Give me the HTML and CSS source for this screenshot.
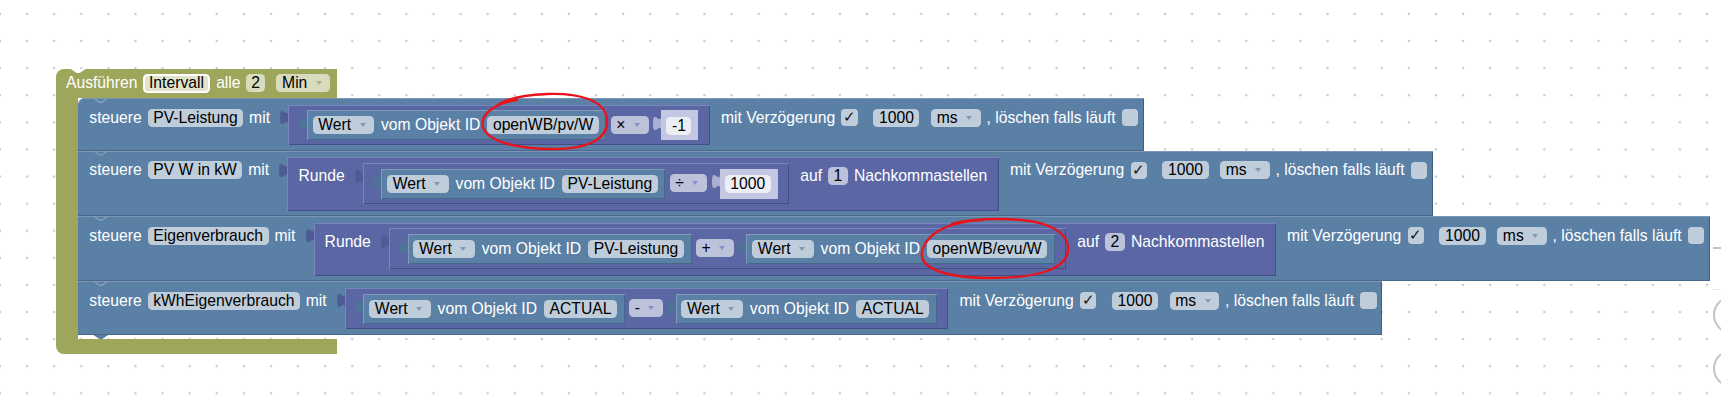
FILE: index.html
```html
<!DOCTYPE html>
<html lang="de">
<head>
<meta charset="utf-8">
<title>Blockly Workspace</title>
<link rel="stylesheet" href="styles.css">
</head>
<body>
<div class="canvas">
  <div class="event">
    <div class="event-head">
      <span class="lbl">Ausführen</span>
      <span class="fld olive sel">Intervall</span>
      <span class="lbl">alle</span>
      <span class="fld olive num">2</span>
      <span class="fld olive dd">Min<i class="arr"></i></span>
    </div>
    <div class="event-body">
      <div class="event-arm"></div>
      <div class="stack">

        <!-- Row 1 -->
        <div class="stmt first">
          <span class="lbl">steuere</span>
          <span class="fld">PV-Leistung</span>
          <span class="lbl">mit</span>
          <span class="slot">
            <svg class="tab tab-purple" viewBox="0 0 8 15"><path d="M8,0 c0,10 -8,-8 -8,7.5 s8,-2.5 8,7.5 z"/></svg>
            <div class="arith">
              <span class="slot">
                <svg class="tab tab-blue" viewBox="0 0 8 15"><path d="M8,0 c0,10 -8,-8 -8,7.5 s8,-2.5 8,7.5 z"/></svg>
                <div class="get">
                  <span class="fld dd">Wert<i class="arr"></i></span>
                  <span class="lbl">vom Objekt ID</span>
                  <span class="fld">openWB/pv/W</span>
                </div>
              </span>
              <span class="fld op dd">×<i class="arr"></i></span>
              <span class="slot">
                <svg class="tab tab-shadow" viewBox="0 0 8 15"><path d="M8,0 c0,10 -8,-8 -8,7.5 s8,-2.5 8,7.5 z"/></svg>
                <div class="shadow"><span class="fld light">-1</span></div>
              </span>
            </div>
          </span>
          <span class="lbl">mit Verzögerung</span>
          <span class="chk">✓</span>
          <span class="fld num">1000</span>
          <span class="fld dd">ms<i class="arr"></i></span>
          <span class="lbl">, löschen falls läuft</span>
          <span class="chk"></span>
        </div>

        <!-- Row 2 -->
        <div class="stmt">
          <span class="lbl">steuere</span>
          <span class="fld">PV W in kW</span>
          <span class="lbl">mit</span>
          <span class="slot">
            <svg class="tab tab-purple" viewBox="0 0 8 15"><path d="M8,0 c0,10 -8,-8 -8,7.5 s8,-2.5 8,7.5 z"/></svg>
            <div class="round">
              <span class="lbl">Runde</span>
              <span class="slot">
                <svg class="tab tab-purple" viewBox="0 0 8 15"><path d="M8,0 c0,10 -8,-8 -8,7.5 s8,-2.5 8,7.5 z"/></svg>
                <div class="arith">
                  <span class="slot">
                    <svg class="tab tab-blue" viewBox="0 0 8 15"><path d="M8,0 c0,10 -8,-8 -8,7.5 s8,-2.5 8,7.5 z"/></svg>
                    <div class="get">
                      <span class="fld dd">Wert<i class="arr"></i></span>
                      <span class="lbl">vom Objekt ID</span>
                      <span class="fld">PV-Leistung</span>
                    </div>
                  </span>
                  <span class="fld op dd">÷<i class="arr"></i></span>
                  <span class="slot">
                    <svg class="tab tab-shadow" viewBox="0 0 8 15"><path d="M8,0 c0,10 -8,-8 -8,7.5 s8,-2.5 8,7.5 z"/></svg>
                    <div class="shadow"><span class="fld light">1000</span></div>
                  </span>
                </div>
              </span>
              <span class="lbl">auf</span>
              <span class="fld pfld">1</span>
              <span class="lbl">Nachkommastellen</span>
            </div>
          </span>
          <span class="lbl">mit Verzögerung</span>
          <span class="chk">✓</span>
          <span class="fld num">1000</span>
          <span class="fld dd">ms<i class="arr"></i></span>
          <span class="lbl">, löschen falls läuft</span>
          <span class="chk"></span>
        </div>

        <!-- Row 3 -->
        <div class="stmt">
          <span class="lbl">steuere</span>
          <span class="fld">Eigenverbrauch</span>
          <span class="lbl">mit</span>
          <span class="slot">
            <svg class="tab tab-purple" viewBox="0 0 8 15"><path d="M8,0 c0,10 -8,-8 -8,7.5 s8,-2.5 8,7.5 z"/></svg>
            <div class="round">
              <span class="lbl">Runde</span>
              <span class="slot">
                <svg class="tab tab-purple" viewBox="0 0 8 15"><path d="M8,0 c0,10 -8,-8 -8,7.5 s8,-2.5 8,7.5 z"/></svg>
                <div class="arith">
                  <span class="slot">
                    <svg class="tab tab-blue" viewBox="0 0 8 15"><path d="M8,0 c0,10 -8,-8 -8,7.5 s8,-2.5 8,7.5 z"/></svg>
                    <div class="get">
                      <span class="fld dd">Wert<i class="arr"></i></span>
                      <span class="lbl">vom Objekt ID</span>
                      <span class="fld">PV-Leistung</span>
                    </div>
                  </span>
                  <span class="fld op dd">+<i class="arr"></i></span>
                  <span class="slot">
                    <svg class="tab tab-blue" viewBox="0 0 8 15"><path d="M8,0 c0,10 -8,-8 -8,7.5 s8,-2.5 8,7.5 z"/></svg>
                    <div class="get">
                      <span class="fld dd">Wert<i class="arr"></i></span>
                      <span class="lbl">vom Objekt ID</span>
                      <span class="fld">openWB/evu/W</span>
                    </div>
                  </span>
                </div>
              </span>
              <span class="lbl">auf</span>
              <span class="fld pfld">2</span>
              <span class="lbl">Nachkommastellen</span>
            </div>
          </span>
          <span class="lbl">mit Verzögerung</span>
          <span class="chk">✓</span>
          <span class="fld num">1000</span>
          <span class="fld dd">ms<i class="arr"></i></span>
          <span class="lbl">, löschen falls läuft</span>
          <span class="chk"></span>
        </div>

        <!-- Row 4 -->
        <div class="stmt last">
          <span class="lbl">steuere</span>
          <span class="fld">kWhEigenverbrauch</span>
          <span class="lbl">mit</span>
          <span class="slot">
            <svg class="tab tab-purple" viewBox="0 0 8 15"><path d="M8,0 c0,10 -8,-8 -8,7.5 s8,-2.5 8,7.5 z"/></svg>
            <div class="arith">
              <span class="slot">
                <svg class="tab tab-blue" viewBox="0 0 8 15"><path d="M8,0 c0,10 -8,-8 -8,7.5 s8,-2.5 8,7.5 z"/></svg>
                <div class="get">
                  <span class="fld dd">Wert<i class="arr"></i></span>
                  <span class="lbl">vom Objekt ID</span>
                  <span class="fld">ACTUAL</span>
                </div>
              </span>
              <span class="fld op dd">-<i class="arr"></i></span>
              <span class="slot">
                <svg class="tab tab-blue" viewBox="0 0 8 15"><path d="M8,0 c0,10 -8,-8 -8,7.5 s8,-2.5 8,7.5 z"/></svg>
                <div class="get">
                  <span class="fld dd">Wert<i class="arr"></i></span>
                  <span class="lbl">vom Objekt ID</span>
                  <span class="fld">ACTUAL</span>
                </div>
              </span>
            </div>
          </span>
          <span class="lbl">mit Verzögerung</span>
          <span class="chk">✓</span>
          <span class="fld num">1000</span>
          <span class="fld dd">ms<i class="arr"></i></span>
          <span class="lbl">, löschen falls läuft</span>
          <span class="chk"></span>
        </div>

      </div>
    </div>
    <div class="event-foot"></div>
  </div>

  <svg class="marks" width="1721" height="413" viewBox="0 0 1721 413">
    <path d="M517,100 C495,103 480,114 483,127 C487,141 516,149 553,149 C588,149 609,139 607,119 C605,100 579,93 547,94 C526,95 509,98 499,104"/>
    <path d="M982,220 C950,221 926,233 922,252 C919,270 950,278 992,278 C1040,278 1069,268 1068,248 C1067,228 1040,219 1000,219 C980,219 962,221 952,224"/>
  </svg>

  <svg class="controls" width="12" height="413" viewBox="0 0 12 413">
    <path class="ctl" d="M2,248 H12"/>
    <path class="ctl-sep" d="M2,289.5 H12"/>
    <circle class="ctl" cx="21" cy="315" r="18"/>
    <circle class="ctl" cx="21" cy="368.5" r="18"/>
  </svg>
</div>
</body>
</html>
```

FILE: styles.css
```css
* { box-sizing: border-box; }

html, body {
  margin: 0;
  padding: 0;
}

body {
  width: 1721px;
  height: 413px;
  overflow: hidden;
  background: #fff;
  font-family: "Liberation Sans", Arial, sans-serif;
  font-size: 15.7px;
}

.canvas {
  position: relative;
  width: 1721px;
  height: 413px;
  background-color: #fff;
  background-image: radial-gradient(circle, #c9c9c9 0.9px, rgba(255,255,255,0) 1.6px);
  background-size: 27.1px 27.1px;
  background-position: -13.55px 0.45px;
  padding: 69px 0 0 55.7px;
}

/* ---------- event (olive C block) ---------- */
.event {
  display: flex;
  flex-direction: column;
  align-items: flex-start;
}

.event-head {
  position: relative;
  width: 281px;
  height: 29.3px;
  background: #9ea65b;
  border-radius: 8px 0 0 0;
  display: flex;
  align-items: flex-start;
  padding: 5px 0 0 10.3px;
  color: #fff;
}

.event-head::before {
  content: "";
  position: absolute;
  top: 0;
  left: 15px;
  width: 15px;
  height: 4px;
  background: #fff;
  clip-path: polygon(0 0, 15px 0, 9px 4px, 6px 4px);
}

.event-body { display: flex; }

.event-arm {
  width: 22.6px;
  background: #9ea65b;
}

.stack {
  display: flex;
  flex-direction: column;
  align-items: flex-start;
  padding-bottom: 4px;
}

.event-foot {
  width: 281px;
  height: 15px;
  background: #9ea65b;
  border-radius: 0 0 0 8px;
}

/* ---------- generic pieces ---------- */
.lbl {
  height: 18px;
  line-height: 18px;
  white-space: nowrap;
  color: #fff;
  flex: none;
}

.fld {
  display: flex;
  align-items: center;
  height: 18px;
  line-height: 18px;
  padding: 0 5.6px;
  border-radius: 4.5px;
  background: #bfcddb;
  color: #000;
  white-space: nowrap;
  flex: none;
}

.fld.olive { background: #d8dbbd; }
.fld.sel {
  height: 19px;
  margin-top: -0.5px;
  padding: 0 4.5px;
  border: 2px solid #fff;
  background: #e1e3cb;
}
.fld.pfld { background: #bdc2db; }
.fld.light { background: #eceef6; }
.fld.op { background: #bdc2db; }

.arr {
  width: 0;
  height: 0;
  margin: 0 3px 0 8.5px;
  border-left: 3px solid transparent;
  border-right: 3px solid transparent;
  border-top: 4.5px solid #7f9bb8;
}
.olive .arr { border-top-color: #b0b778; }
.op .arr { border-top-color: #8990c4; }

.chk {
  width: 16.3px;
  height: 17px;
  border-radius: 4px;
  background: #bfcddb;
  color: #111;
  font-family: "DejaVu Sans", sans-serif;
  font-size: 15px;
  font-weight: 300;
  line-height: 17px;
  text-align: center;
  flex: none;
}

/* horizontal rhythm */
.event-head > * + *,
.stmt > * + *,
.round > * + *,
.get > * + *,
.arith > * + * { margin-left: 5.7px; }

.event-head > .lbl + .fld { margin-left: 5px; }
.event-head > .num + .dd { margin-left: 11px; }

.stmt > .lbl + .fld { margin-left: 6px; }
.stmt > .slot,
.round > .slot { margin-left: 10.3px; }
.stmt > .slot + .lbl,
.round > .slot + .lbl { margin-left: 11px; }
.stmt > .lbl + .chk { margin-left: 6.3px; }
.stmt > .chk + .fld { margin-left: 15.6px; }
.stmt > .num + .dd { margin-left: 11.7px; }

.get > .fld + .lbl { margin-left: 6.8px; }
.get > .lbl + .fld { margin-left: 7px; }

.arith > .slot + .op { margin-left: 4.3px; }
.arith > .op + .slot { margin-left: 4.7px; }

.round > .fld + .lbl { margin-left: 6.2px; }

/* ---------- statement blocks ---------- */
.stmt {
  position: relative;
  display: flex;
  align-items: flex-start;
  background: #5b80a5;
  padding: 6.5px 5.7px 5.5px 11px;
  box-shadow: inset 0 1px 0 #7b97b5, inset 0 -1px 0 #46698c, inset -1px 0 0 #3f5f80;
}
.stmt.first { border-radius: 7px 0 0 0; }
.stmt.last { padding-bottom: 6.4px; }

.stmt > .lbl,
.stmt > .fld { margin-top: 4px; }
.stmt > .chk { margin-top: 4.4px; }

.stmt::before {
  content: "";
  position: absolute;
  top: 0;
  left: 15px;
  width: 15px;
  height: 5px;
  background: #8aa3bd;
  clip-path: polygon(0 0, 1.6px 0, 6.6px 3.4px, 8.4px 3.4px, 13.4px 0, 15px 0, 9px 4.6px, 6px 4.6px);
}

.stmt.last::after {
  content: "";
  position: absolute;
  top: 100%;
  left: 15px;
  width: 15px;
  height: 4px;
  background: #5b80a5;
  clip-path: polygon(0 0, 15px 0, 9px 4px, 6px 4px);
}

/* ---------- value blocks ---------- */
.slot {
  display: flex;
  align-items: flex-start;
  flex: none;
}

.tab {
  width: 8px;
  height: 15px;
  margin-top: 5.5px;
  flex: none;
}
.tab-purple { fill: #4f5a96; }
.tab-blue { fill: #4f7298; }
.tab-shadow { fill: #aab0d2; }

.round {
  display: flex;
  align-items: flex-start;
  background: #5b67a5;
  padding: 5.7px 11.7px 6.8px 11px;
  box-shadow: inset 0 1px 0 #7a84ba, inset 1px 0 0 #7a84ba, inset 0 -1px 0 #434d85, inset -1px 0 0 #434d85;
}
.round > .lbl,
.round > .fld { margin-top: 4.3px; }

.arith {
  display: flex;
  align-items: flex-start;
  background: #5b67a5;
  padding: 5.7px 11.5px 5px 10.5px;
  box-shadow: inset 0 1px 0 #7a84ba, inset 1px 0 0 #7a84ba, inset 0 -1px 0 #434d85, inset -1px 0 0 #434d85;
}
.arith > .op { margin-top: 5.3px; }

.get {
  display: flex;
  align-items: flex-start;
  height: 30px;
  background: #5b80a5;
  padding: 6px 7.7px 6px 5.8px;
  box-shadow: inset 0 1px 0 #7f9bb8, inset 1px 0 0 #7f9bb8, inset 0 -1px 0 #44678a, inset -1px 0 0 #44678a;
}

.shadow {
  display: flex;
  align-items: flex-start;
  height: 30px;
  background: #c3c7e2;
  padding: 6.5px 7px 5.5px 5px;
}

/* ---------- overlays ---------- */
.marks {
  position: absolute;
  left: 0;
  top: 0;
  pointer-events: none;
  fill: none;
  stroke: #e8141b;
  stroke-width: 2.4;
  stroke-linecap: round;
  stroke-linejoin: round;
}

.controls {
  position: absolute;
  left: 1711px;
  top: 0;
  fill: none;
}
.ctl { stroke: #c4c4c4; stroke-width: 2; fill: none; }
.ctl-sep { stroke: #e2e2e2; stroke-width: 1; }
```
